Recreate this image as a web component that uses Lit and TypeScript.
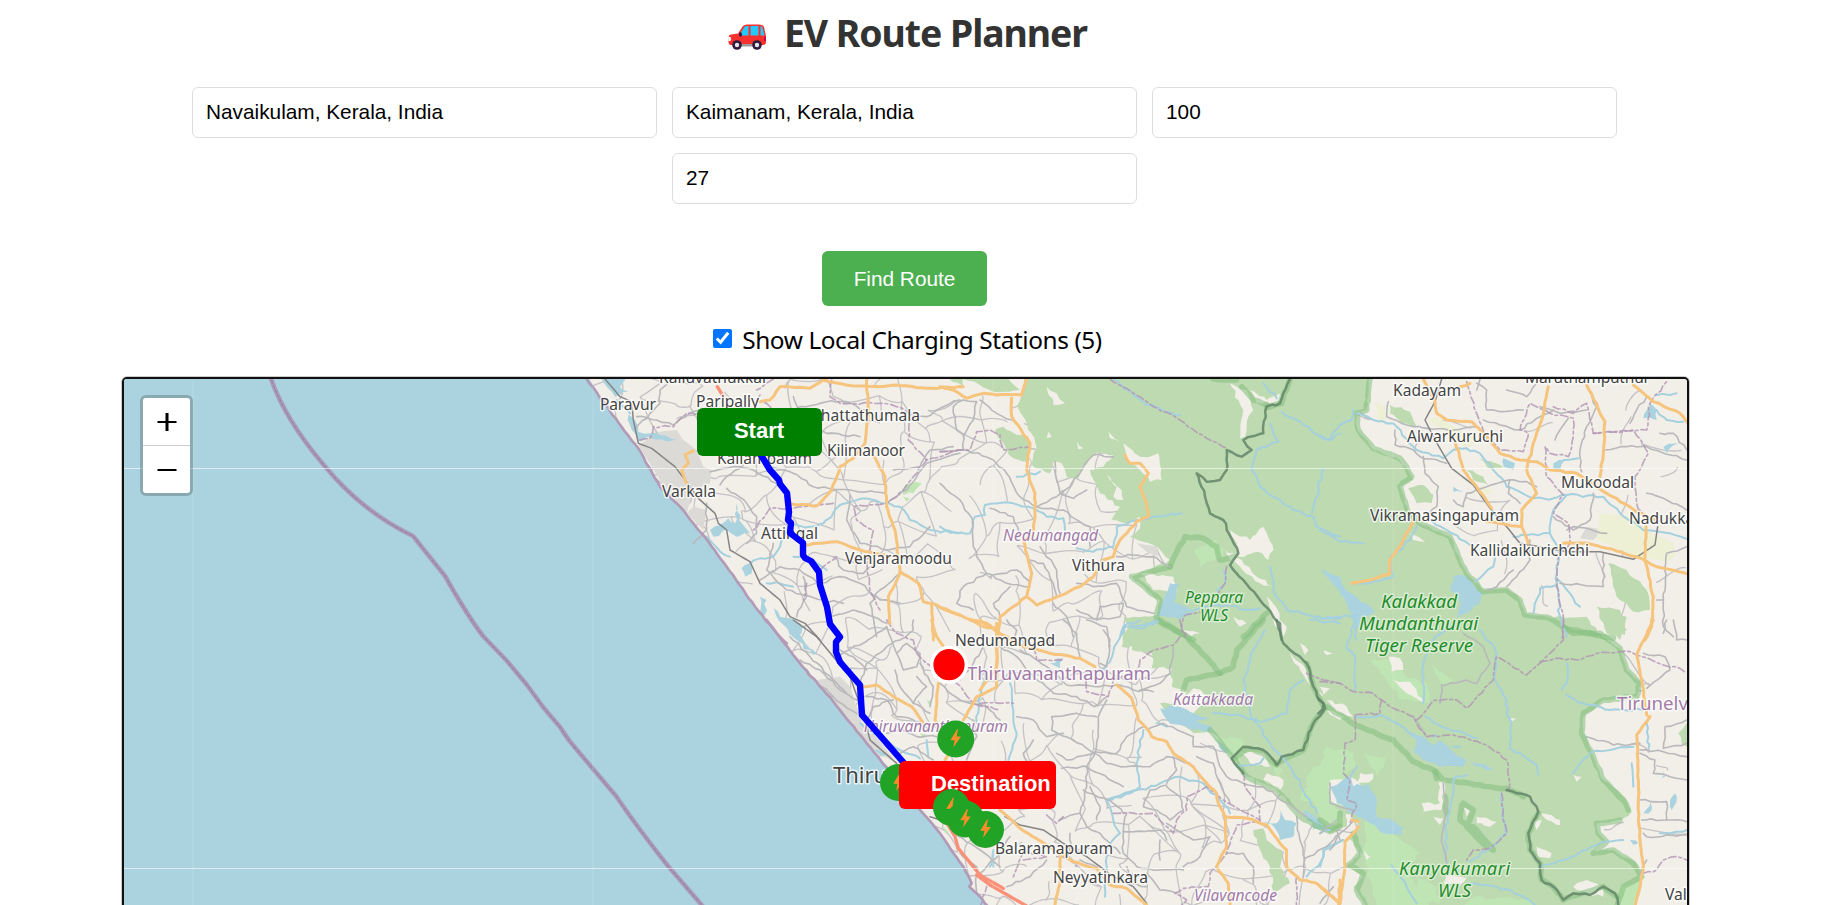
import { LitElement, html, svg, css } from "lit";
import { customElement, property, state } from "lit/decorators.js";

type Kind =
    | "forest" | "scrub" | "clearing" | "urban" | "farm" | "lake"
    | "river" | "minor" | "major" | "trunk" | "rail" | "admin"
    | "reserve" | "border" | "coast";

interface Sheet {
    x: number;
    y: number;
    shapes: Partial<Record<Kind, string[]>>;
}

interface Label {
    text: string;
    x: number;
    y: number;
    width?: number;
    kind?: string;
}

const AREAS: Kind[] = ["urban", "farm", "forest", "scrub", "clearing", "lake"];
const LINES: Kind[] = ["reserve", "river", "minor", "admin", "coast", "rail", "major", "trunk", "border"];

// how far a segment may stray from the straight line, in sheet units
const STRAY: Partial<Record<Kind, number>> = {
    forest: 9, scrub: 12, clearing: 10, lake: 12, river: 9, minor: 7, major: 4, admin: 6, border: 7, reserve: 5, coast: 3,
};

// Sheets are drawn at three units to the pixel
const SHEETS: Sheet[] = [
    {
        x: 560, y: 370,
        shapes: {
            urban: [
                "235,225 300,185 350,180 370,210 410,240 430,290 455,300 450,340 400,360 380,430 330,400 300,330",
                "400,410 440,420 430,480 380,430",
            ],
            forest: ["1150,20 1210,20 1210,48"],
            lake: [
                "120,20 200,20 180,50 205,65 165,80 140,50",
                "205,135 225,150 235,185 270,190 350,210 320,215 260,200 235,215 215,180",
                "505,445 525,460 530,400 545,460 570,490 530,500 500,480 460,500 450,480",
                "545,595 570,580 575,610 555,620",
                "600,680 620,690 615,735 600,730",
                "635,700 660,740 720,760 725,790 700,800 650,740",
            ],
            river: [
                "570,580 600,565 640,560 660,530 690,465 750,470 790,460 840,405 910,385 980,400 1020,410 1050,450 1110,480 1200,490",
                "440,500 480,545 510,560", "620,640 660,640 700,650", "700,560 760,570 800,600", "170,90 210,130",
            ],
            minor: [
                "225,180 270,130 300,100 300,60 330,35", "230,140 290,150 340,165 400,125 470,110",
                "620,150 720,110 800,95 860,95 925,130", "700,80 720,130 800,190 900,200",
                "440,400 440,480 400,520", "450,305 520,290 580,300 650,340", "480,345 500,320 550,285",
                "500,355 560,400 590,440 590,490 560,520", "630,290 700,310 760,350 870,360 975,370",
                "980,400 1040,360 1100,280 1200,250", "870,375 860,450 900,520 985,540 1050,530 1110,470",
                "600,630 660,590 720,600 780,640 840,620 900,640 960,690 1020,700", "640,520 620,600 680,660 790,690 850,700",
                "800,740 880,720 940,740 980,760", "730,620 740,680 710,740", "820,560 850,600 910,610 960,570",
                "1020,610 960,660 930,700 950,800", "1000,300 1080,290 1110,240 1180,230", "1030,130 1100,140 1150,110 1200,90",
            ],
            rail: ["135,27 180,80 215,95 220,150 235,220 275,235 345,290 390,350 415,385 465,430 475,460 500,480 510,540 570,575 600,640 660,690 690,740 735,760 780,810"],
            major: [
                "600,95 630,90 660,50 750,55 790,30 860,45 960,50 1010,45 1100,55 1210,50",
                "920,27 925,130 915,220 880,265 840,290 815,360 770,408 695,402",
                "930,240 975,320 980,410 1005,480 1020,610 985,680 990,760",
                "400,243 375,255 385,280 365,300 380,340", "730,525 830,515 900,540 990,560",
                "1020,605 1075,640 1090,695 1115,700 1200,735", "1115,700 1120,810",
            ],
            trunk: ["472,50 490,80"],
            admin: [
                "240,210 270,205 280,170 340,170 380,130 420,130", "600,75 590,95 620,100 650,130", "640,27 590,60",
                "815,30 810,80 840,100 960,100 1010,110 1050,130 1045,210 1100,270 1200,240",
                "1100,270 1060,320 1030,360 980,400 880,410 890,450 940,480 920,580 930,660 960,720",
                "820,400 700,415 630,415 580,480", "780,600 830,560", "740,640 730,690",
            ],
            scrub: ["1035,345 1085,340 1060,370 1030,375", "1030,380 1050,385 1040,395", "320,470 350,480 330,500"],
            coast: ["80,27 130,95 195,185 235,235 300,350 360,410 425,490 500,590 585,710 650,790 680,820"],
        },
    },
    {
        x: 940, y: 370,
        shapes: {
            forest: [
                "265,0 250,60 232,105 262,165 290,235 275,285 330,310 340,275 365,280 380,320 415,325 425,290 470,250 520,255 490,290 450,300 480,370 540,410 515,450 560,460 600,440 600,475 570,500 640,525 690,570 575,620 660,690 650,745 575,755 550,790 545,830 1230,830 1230,0",
                "165,180 190,170 230,195 265,200 265,275 220,265",
                "60,20 190,20 240,60 160,65 120,45",
            ],
            scrub: ["760,540 830,510 850,560 780,590"],
            clearing: [
                "320,50 350,70 375,100 340,105", "505,185 540,215 510,205", "325,185 320,205 335,200", "410,215 430,235 415,238",
                "550,220 600,260 655,250 665,330 630,335 600,300 560,270", "500,315 545,360 550,390 520,380 530,350",
                "870,40 920,60 940,120 925,140 915,200 900,205 910,120", "930,60 980,90 1020,70 1010,100 950,100",
                "870,480 930,510 970,470 1000,540 985,570 950,545 895,560 890,520", "840,530 880,550 950,620 1000,650 960,640 900,590",
                "980,680 1040,770 1030,800 1000,750", "880,740 920,760 900,770", "730,780 780,790 740,800",
                "600,610 700,620 710,670 640,660",
            ],
            urban: ["590,520 650,530 655,560 620,545", "700,570 760,530 770,545 715,600"],
            lake: ["690,640 720,640 700,700 760,720 720,750 650,740 670,690", "1140,595 1200,620 1200,655 1165,625"],
            river: [
                "0,470 50,490 90,490 105,440 135,435 135,405 220,400 280,415 320,440 370,445 375,480",
                "410,535 460,545 520,530 530,470 590,450 640,440 725,430",
                "520,27 620,105 720,135", "990,160 1015,215 950,240 935,300 960,350 1060,420 1120,440 1130,470 1200,500",
                "1150,295 1115,430", "1025,125 1080,155 1165,210 1200,190", "970,40 1010,85", "990,590 1000,660 1040,720 1120,740 1200,745",
                "540,800 555,770 600,775 655,755", "720,740 780,715 860,705 920,720 960,715", "850,600 855,640 830,660", "230,320 300,305",
            ],
            minor: [
                "0,245 80,240 160,270 200,310 240,380 290,410 350,380 390,350 430,290 460,255 520,260", "0,340 60,390 100,460 100,530 140,610 200,640 270,650",
                "70,90 40,110 50,180 70,195 70,240", "70,90 110,95 100,150 70,200", "120,90 170,130 215,150", "290,410 370,420 450,470 450,530",
                "345,275 350,330 360,370 400,385 440,360", "150,415 220,440 240,500", "300,530 350,600 360,670", "270,570 310,580 340,640 350,680",
                "410,640 460,650 530,640 560,710 640,730", "530,560 580,555 640,560 690,590", "140,610 70,650 50,700 100,720", "210,650 160,700 180,740",
                "340,700 380,740 400,800", "410,720 470,750 540,740 550,700 480,710 470,750", "150,620 230,600 270,640", "200,750 230,780 220,810",
            ],
            major: [
                "0,50 40,60 80,85 130,70 170,75 245,75 260,27", "215,85 215,140 270,220 260,300 285,370 285,430 280,490 250,510 275,610 260,680 180,740 175,800",
                "260,680 290,705 330,690 420,650 460,620 490,570 520,560 540,510 590,455 625,440 620,400 600,350 625,310 600,280 570,280 555,255",
                "0,712 80,745 140,760 175,785",
            ],
            admin: [
                "510,27 600,80 640,110 720,150 800,205 860,235", "0,245 90,240 110,185 150,180 180,195 190,240 270,230",
                "860,590 855,640 830,680", "800,720 730,740 725,780 740,800",
            ],
            reserve: [
                "690,590 575,620 660,690 650,750 760,810", "690,590 735,500 790,505 830,530 840,570 880,560",
                "905,50 940,90 980,105", "820,27 890,30", "980,730 910,800", "1050,27 1025,100 980,112",
            ],
            border: ["1050,27 1020,100 980,110 970,190 910,210 935,240 905,260 860,240 860,300 840,330 800,335 770,310 795,380 810,430 850,450 895,550 870,585 960,690 1020,760 1025,810"],
        },
    },
    {
        x: 1320, y: 370,
        shapes: {
            farm: [
                "165,95 195,110 200,150 175,150", "320,150 350,140 400,170 480,210 440,235 370,180",
                "840,430 940,440 980,480 1060,520 1065,560 1040,575 950,560 830,510", "470,350 520,360 500,375",
            ],
            urban: ["800,470 850,480 820,510 780,505"],
            forest: [
                "-20,0 150,0 140,120 105,130 110,170 160,240 240,270 280,330 240,350 265,430 310,465 390,500 420,570 440,610 490,660 560,655 600,690 615,730 680,745 730,770 800,780 880,830 -20,830",
                "210,105 270,125 290,170 245,160 210,130", "265,355 310,345 340,375 335,400 290,400",
                "865,580 920,600 980,660 990,720 940,725 890,680", "830,710 900,720 920,780 900,810 860,790", "700,750 800,740 840,800 760,810",
                "440,300 490,320 505,345 460,330", "480,265 550,290 510,297",
            ],
            clearing: ["270,490 315,515 280,510"],
            lake: [
                "400,620 440,620 490,670 480,700 410,745 420,690 390,660", "0,595 60,640 110,680 165,725 130,740 110,780 80,700",
                "550,265 585,280 580,300 552,290", "700,280 735,270 720,300 700,300", "400,350 430,365 400,365",
                "990,100 1010,120 1010,150 970,145", "1030,230 1075,220 1040,250", "660,180 650,190 655,175", "515,75 505,90",
            ],
            river: [
                "110,130 160,150 220,160 290,240 370,265 400,240 440,235 480,250 560,350 640,385 700,385 740,375 850,380 900,430 970,480 1050,490 1110,510",
                "740,375 700,420 690,490 620,495 580,500", "690,490 715,540 710,640 720,740 740,800", "715,630 750,670 780,710",
                "710,645 660,655 640,730", "525,565 520,590 465,635", "320,450 380,480 450,525", "0,480 60,515 130,520",
                "290,470 270,510 210,560 220,620 150,640 100,640", "0,195 30,210 60,165 95,150 100,120", "730,270 775,265", "1010,75 1070,70",
                "0,745 50,740 110,735", "110,810 105,770", "340,810 390,770", "1010,120 1040,150 1090,155",
            ],
            minor: [
                "205,95 200,140 280,170 400,180 470,170", "225,180 225,225 280,240 300,260 380,280", "310,260 315,310 355,350 350,410 310,440",
                "470,40 500,60 500,120 540,125 610,120", "490,150 540,165 600,180 660,140 700,120", "660,110 720,130 800,120", "745,145 705,210",
                "855,240 920,230 980,230 1100,270", "930,160 950,120 980,80", "1020,190 1060,190 1100,240", "800,50 830,110 800,170 780,240 785,305",
                "820,370 810,450 760,480 700,440", "400,390 430,410 440,370 500,350 565,330", "570,330 565,370 600,400", "565,330 620,335 650,350",
                "850,550 850,650 720,640", "630,510 630,570 590,620 560,650", "580,600 530,650", "1100,530 1040,550 1030,690 1010,690", "1030,690 1030,770 1060,800",
                "980,370 1040,390 1100,420", "480,27 470,60", "560,60 620,80 650,40", "740,480 760,470 860,490", "500,660 530,650",
            ],
            rail: ["365,27 345,95 315,150 345,210 395,295 460,345 510,415 560,470 600,520 740,545 840,545 940,568 1005,525 1013,470"],
            major: [
                "310,27 345,95 350,130 380,150 455,155 500,200 540,250 600,270 650,275 690,300 770,310 860,370 960,430 1010,450",
                "405,215 425,280 430,300 470,350 515,415", "685,50 665,150 640,220 620,300 650,370 605,420 605,470 625,520",
                "500,455 605,470", "800,45 855,155 850,250 840,320", "940,45 1000,95 1080,130 1110,170",
                "730,520 800,520 860,535 950,560 1010,590 1110,615", "978,470 975,570 1000,680 995,770 975,810",
                "280,455 250,510 210,570 210,610 150,630 95,640", "420,50 450,40",
            ],
            admin: [
                "440,35 470,130 490,185 540,240 610,245 625,190 600,180 630,100 690,130 760,145 760,200 745,260 690,250 675,230 680,320 730,375 700,430 745,460 750,520 715,560 710,650 730,740 725,810",
                "700,110 760,130 800,100 820,190 940,180 985,250 945,320 950,400 970,440", "820,190 980,180 990,100 1040,35",
            ],
            reserve: ["150,27 140,120 110,130 115,180 160,235 240,265 275,320 240,350 265,430 310,465 390,500 420,570 440,610 490,665 560,660 600,690 615,735 690,745 735,775 800,790 880,805"],
        },
    },
    {
        x: 700, y: 620,
        shapes: {
            urban: ["350,180 420,170 450,200 480,290 560,390 590,430 520,390 440,300"],
            lake: ["240,0 290,10 310,60 350,100 340,105 290,60", "520,390 560,400 550,410"],
            river: ["480,310 520,340 560,360 600,390 660,415", "860,150 835,240 830,310", "680,360 685,410", "740,550 790,600", "880,700 870,740"],
            minor: [
                "410,110 520,50 560,20", "480,190 500,130 560,80 600,60 640,30 640,0", "560,20 590,100 620,70 660,100 650,140 610,150 590,100",
                "585,150 600,200 640,250 690,280", "500,230 560,240 590,290 640,300 690,330", "500,300 520,260 580,240",
                "660,130 700,200 690,260", "850,80 820,130 780,180", "720,190 780,240 860,260 900,300", "560,340 610,330 650,350 710,350",
                "320,160 400,230 470,280", "300,120 360,150 420,210 480,250", "270,50 330,110 440,220", "800,420 830,350 820,300", "700,420 640,380 600,400",
                "760,640 840,690 900,740", "780,700 830,740 830,820", "650,170 680,200 640,250", "500,150 460,110 420,90", "840,760 900,700 930,650",
            ],
            rail: ["280,0 350,50 400,110 450,170 475,240 500,320 510,360 590,430", "690,590 720,600"],
            major: [
                "695,0 710,50 740,90", "890,10 890,130 890,200 830,230 790,300", "490,200 530,195 580,230 635,260 670,310",
                "715,190 705,300 735,370", "810,0 850,20 890,25", "735,420 755,380",
            ],
            trunk: ["735,600 765,650 775,685 840,765 910,805"],
            admin: ["560,0 590,40 640,60 650,100 700,150 770,190 820,250 900,270", "0,847 12,860"],
            scrub: ["660,340 680,345 670,355", "680,240 695,245 690,260", "730,620 745,635 735,640"],
            coast: ["200,0 300,130 400,245 500,370 590,480 660,570 720,640 790,740 815,790 808,800 835,825 865,860"],
        },
    },
    {
        x: 980, y: 620,
        shapes: {
            forest: [
                "430,-10 460,40 455,90 515,100 515,145 575,145 575,200 620,215 605,250 540,250 570,290 640,340 700,340 760,400 790,460 890,510 960,580 1050,640 1100,620 1100,-10",
                "820,630 850,625 860,660 905,690 900,740 930,790 880,815 870,740 845,700",
            ],
            scrub: ["720,350 790,360 780,440 730,390", "1000,440 1090,430 1090,560 960,540", "870,430 910,450 890,470", "1000,540 1060,560 1090,600 1040,620"],
            clearing: [
                "780,395 850,400 870,440 810,430", "860,460 910,480 900,510 850,480", "960,70 985,90 975,105", "930,100 980,150 990,195 960,150",
                "1030,90 1055,100 1040,105", "1040,270 1090,290 1080,300", "1080,480 1045,500 1060,545 1085,540", "1010,210 1030,230", "640,205 690,230 640,280 570,270 600,240",
            ],
            lake: [
                "540,265 600,260 690,300 650,300 700,330 640,330 560,300", "900,570 915,600 950,610 940,650 900,660 885,625 850,605 890,610",
                "970,570 1030,610 1040,640 1000,625", "210,130 250,115 240,145", "700,350 750,400 730,395", "1050,500 1085,500 1080,545",
            ],
            river: [
                "480,0 430,20 400,95 370,150", "855,30 820,90 790,180 810,280 870,370 930,440 990,540 1010,580", "970,180 930,210 920,280 850,305 780,285 700,280",
                "490,330 470,430 480,500 380,540", "380,540 400,600 420,640 385,680 380,740 375,830", "540,490 600,470 670,490 720,540 750,580",
                "380,540 450,520 540,490", "90,190 100,270 110,340 85,420", "990,0 1080,10", "1090,660 1040,680 1020,730 980,770", "770,440 840,430 850,415", "530,310 560,320",
                "450,20 510,10 530,0", "40,690 40,740",
            ],
            minor: [
                "60,80 110,110 160,170 220,220 290,230 345,260 380,230", "120,90 200,140 260,195 345,200 420,195 460,210 520,215",
                "380,240 355,290 355,350 345,400 320,440 320,500 300,580", "345,400 280,360 215,330 215,290 290,280 350,290",
                "110,290 160,300 200,350 250,340", "345,400 380,430 440,440 510,440 560,410 630,430", "345,395 410,400 440,350 490,320",
                "230,400 260,420 345,400", "245,445 320,440 430,500", "310,510 400,550 430,580", "560,500 600,530 610,570 570,600 530,570 490,560 510,510 560,495",
                "440,580 430,630 430,700 470,740 540,750 610,750", "430,635 540,630 560,660", "560,610 640,660 690,650 660,710 610,740",
                "640,350 640,380 700,380 720,440 740,470 790,490 850,500 950,570 980,590", "650,410 700,430 715,480 750,550", "740,700 790,700 820,740 820,790",
                "950,590 960,660 975,715 970,770", "975,715 1040,680 1080,640", "240,600 300,580 320,620 360,640 420,700", "200,720 150,770 80,800",
                "500,760 540,810 590,820", "440,740 450,790 500,800", "370,30 390,60 380,140 360,130", "250,0 290,40 300,110", "320,0 380,20 390,80",
                "480,210 540,190 570,160 580,80", "500,330 550,310 640,350", "150,440 130,400 160,360", "300,720 350,740 380,790", "540,660 540,720", "270,640 270,700 230,710",
                "330,500 360,560 350,600", "580,410 590,450 560,490",
            ],
            rail: ["75,590 120,615 190,630 250,670 320,710 400,770 460,800 500,850"],
            major: [
                "0,0 50,35 50,140 0,210", "50,35 120,75 210,100 300,115 345,140", "410,195 455,235 475,300 500,325 515,350 560,365 580,400 640,440 680,490 710,520 715,550 735,590 740,680 710,740 745,790 750,855",
                "735,590 800,595 860,615 900,670 920,690 920,740 960,780 1010,790 1080,850", "60,570 120,625 200,675 240,700 280,725 350,745 390,795 440,805 500,855", "240,700 240,790 225,855",
                "1080,780 1076,855",
            ],
            trunk: ["-10,765 30,795 140,858"],
            admin: [
                "600,50 580,75 520,90 480,120 470,150 400,180 385,230 320,215 320,160", "160,80 170,120 250,120", "0,250 60,250 100,250",
                "200,585 230,610 250,590", "400,580 520,580 580,640 590,600 620,570 620,530 680,500 730,540 800,580 840,600",
                "790,460 795,500 840,560 840,605 770,615 740,700 690,760 685,800 610,805 585,820 620,840 600,860", "980,160 1030,180 1080,190",
                "130,720 200,710 130,690 100,770", "0,860 20,800", "210,680 290,740", "950,770 950,860", "600,0 615,50",
            ],
            reserve: [
                "540,0 620,50 720,160 760,140 770,90 850,0", "720,160 620,180 610,210", "690,330 755,410 800,470 890,510 960,590 1050,635 1080,620",
                "890,435 850,400 800,385 760,415", "890,430 970,390 1000,310 1035,265 1000,200 980,130",
            ],
            border: ["890,0 910,70 980,130 1000,200 1035,265 1000,310 970,390 905,410 890,435 850,390 790,380 755,415 790,460"],
        },
    },
    {
        x: 1320, y: 620,
        shapes: {
            forest: [
                "-20,-10 730,-10 760,40 840,40 900,85 920,150 965,190 950,230 850,240 790,290 790,340 820,410 850,480 920,540 935,575 900,600 830,610 835,640 860,665 820,690 880,690 950,730 970,770 930,800 890,860 140,860 100,800 130,770 80,735 130,705 85,655 115,605 60,570 -20,630",
                "840,-10 920,-10 915,45 870,30", "1100,310 1075,340 1085,370 1110,385",
            ],
            scrub: [
                "150,120 210,120 260,170 320,190 330,250 250,240 210,200", "20,380 100,400 110,440 60,470 0,440", "0,480 40,500 20,560 0,560",
                "140,590 230,650 300,700 260,760 330,860 170,860 130,700", "130,400 200,410 170,470", "900,800 960,780 950,860 890,860", "460,830 620,840 640,860 430,860",
                "330,130 400,180 370,200", "290,770 350,800 360,850 290,850",
            ],
            clearing: [
                "205,110 240,115 250,150 215,155", "220,180 270,185 315,250 260,220", "0,200 30,205 10,225", "20,240 80,260 100,290 50,275",
                "120,460 160,460 150,485 110,490", "30,480 90,470 130,500 80,560 30,540", "305,550 360,550 355,490 375,480 365,570 310,575", "340,590 370,595 360,615",
                "470,590 530,605 510,620 470,610", "665,580 720,600 720,615 680,600", "635,600 665,600 650,630", "650,680 695,700 690,715 655,710",
                "760,800 800,780 845,800 850,830 800,820", "760,465 785,470 770,485", "570,295 588,295 575,305", "380,765 440,775 420,795 370,790", "10,95 40,100 20,105",
                "430,560 450,570 440,590", "130,690 150,710 140,720",
            ],
            lake: [
                "260,335 290,345 340,375 360,360 390,385 440,420 430,440 360,440 310,420 280,395 290,370", "440,415 520,450 470,440",
                "40,500 80,470 100,500 145,490 170,540 170,590 250,620 245,645 190,640 150,610 100,580 50,550", "1065,520 1070,545 1055,570 1050,545",
                "990,545 995,570 970,580", "1030,450 1035,470 1025,475", "930,660 955,670 940,675",
            ],
            river: [
                "105,0 80,85 105,110 105,210", "310,250 310,130 330,70 370,30 440,0", "480,30 530,100 525,180 560,240 560,280 575,310 570,385 650,435 655,465",
                "760,460 780,430 815,395 870,390 940,380", "105,290 180,285 240,315 280,345", "315,290 380,325 470,355", "740,130 740,190 725,210", "740,225 790,250 870,270 970,270",
                "545,520 550,600 560,640 510,685 450,725", "405,475 390,560 375,620 380,740", "440,465 400,475", "440,790 530,800 600,825 645,855", "660,745 730,720 800,690 850,665 910,660",
                "215,735 260,800 290,850", "110,440 90,480", "0,640 30,630", "400,380 420,380", "340,350 350,345", "935,430 940,500", "980,310 985,350 985,390", "0,740 10,690 70,660", "1100,630 1020,640",
            ],
            minor: [
                "980,205 1050,150 1035,110 970,100", "1060,0 1070,60 1100,60", "800,350 880,375 960,370", "960,390 1030,395 1100,410", "1100,300 1035,320 1030,385 1100,370",
                "960,400 1005,420 1000,460 1050,470 1100,480", "955,540 1040,545 1040,600 1100,605", "970,640 980,650 1100,645", "965,600 1040,600", "1040,0 1030,40", "980,720 960,760",
                "370,490 380,560 365,650 380,740", "110,600 60,640 30,690", "0,640 50,600", "60,660 50,630", "0,850 40,800", "30,490 30,550 100,570",
                "360,250 365,195 440,180 470,190 510,130 490,80 430,40", "320,350 280,290",
            ],
            major: [
                "1000,0 950,105 965,180 980,285 990,290 950,345 955,500 955,600 970,750 945,860", "115,620 100,640 75,665 75,740 60,850 0,800",
                "95,600 115,605",
            ],
            admin: [
                "0,185 60,190 100,215 160,220 220,265 280,290 290,310 320,350 400,345 500,375 560,420 570,490 565,510", "290,300 345,240 410,240 440,265 520,180 530,110 620,165 690,100 730,60 730,0",
                "660,125 720,115 770,120 830,100 930,95 1030,135 1080,145 1100,160", "105,285 180,280 185,240", "105,290 105,360 75,370 70,460 90,480 80,540 110,550 90,610",
                "545,520 550,600 560,640 510,685 460,690 440,720", "970,760 1010,750 1030,720 1070,710 1100,720",
            ],
            reserve: [
                "20,260 105,315 220,360 280,425 340,450 370,480 570,510 610,530", "730,20 760,40 840,40 900,85 920,150 960,190 950,230 850,240 790,280 785,340 820,410 850,480 910,540 925,570",
                "430,550 460,570 440,620 500,680 520,690 470,630 420,600 425,555", "375,530 380,580", "900,600 830,610 835,640 860,665 820,700 880,690 940,730 965,770 910,800 890,860",
                "100,640 120,700 85,735 130,760 110,810 135,855", "0,600 30,625 60,610 60,580", "345,455 350,475",
                "655,580 625,640 630,690 660,730 665,780 700,800 730,840 850,800 890,830",
            ],
            border: ["560,510 590,520 630,530 655,575 625,640 630,690 660,730 665,780 700,800 730,840 760,820 810,825 850,800 885,820 895,858", "-5,235 10,250 8,268 -5,280"],
        },
    },
];

const LABELS: Label[] = [
    { text: "Paravur", x: 600, y: 410, width: 56 },
    { text: "Kalluvathukkal", x: 659, y: 383, width: 107 },
    { text: "Paripally", x: 696, y: 407, width: 63 },
    { text: "Chattathumala", x: 811, y: 421, width: 109 },
    { text: "Kilimanoor", x: 827, y: 456, width: 78 },
    { text: "Kallambalam", x: 717, y: 464, width: 95 },
    { text: "Varkala", x: 662, y: 497, width: 54 },
    { text: "Attingal", x: 761, y: 539, width: 57 },
    { text: "Venjaramoodu", x: 845, y: 564, width: 107 },
    { text: "Nedumangad", x: 1003, y: 541, width: 95, kind: "taluk" },
    { text: "Vithura", x: 1072, y: 571, width: 53 },
    { text: "Peppara", x: 1185, y: 603, width: 58, kind: "park" },
    { text: "WLS", x: 1200, y: 621, width: 28, kind: "park" },
    { text: "Kadayam", x: 1393, y: 396, width: 68 },
    { text: "Maruthamputhur", x: 1525, y: 383, width: 125 },
    { text: "Alwarkuruchi", x: 1407, y: 442, width: 96 },
    { text: "Mukoodal", x: 1561, y: 488, width: 73 },
    { text: "Vikramasingapuram", x: 1370, y: 521, width: 149 },
    { text: "Nadukkavu", x: 1629, y: 524 },
    { text: "Kallidaikurichchi", x: 1470, y: 556, width: 119 },
    { text: "Kalakkad", x: 1381, y: 608, width: 76, kind: "park big" },
    { text: "Mundanthurai", x: 1359, y: 630, width: 119, kind: "park big" },
    { text: "Tiger Reserve", x: 1365, y: 652, width: 108, kind: "park big" },
    { text: "Nedumangad", x: 955, y: 646, width: 100 },
    { text: "Thiruvananthapuram", x: 967, y: 680, width: 184, kind: "district" },
    { text: "Thiruvananthapuram", x: 862, y: 732, width: 146, kind: "taluk" },
    { text: "Thiruvananthapuram", x: 833, y: 783, kind: "city" },
    { text: "Kattakkada", x: 1173, y: 705, width: 80, kind: "taluk" },
    { text: "Balaramapuram", x: 995, y: 854, width: 118 },
    { text: "Neyyatinkara", x: 1053, y: 883, width: 95 },
    { text: "Vilavancode", x: 1194, y: 901, width: 83, kind: "taluk" },
    { text: "Kanyakumari", x: 1399, y: 875, width: 111, kind: "park mid" },
    { text: "WLS", x: 1438, y: 897, width: 33, kind: "park mid" },
    { text: "Tirunelveli", x: 1617, y: 710, kind: "district" },
    { text: "Valliyur", x: 1665, y: 900 },
];

const COAST = "587,375 603,402 625,432 638,448 660,487 680,507 702,533 727,567 755,607 777,633 800,663 833,702 867,743 897,780 920,810 940,833 963,867 972,884 969,887 978,895 990,908";
const SEA_LIMIT = "M270 376Q284 418 323 464Q361 511 413 536L445 576Q467 615 483 636L507 661L527 685L543 707L560 727Q568 740 577 750L616 796Q640 831 668 866L706 910";
const ROUTE = "761,455 770,470 779,480 780,484 787,493 789,512 788,520 791,523 790,533 803,543 803,555 805,558 811,561 819,572 820,585 827,607 830,624 840,637 836,642 836,652 840,662 860,685 862,715 904,763";

const STATIONS = [
    { x: 898.5, y: 782.5, under: true },
    { x: 955.7, y: 739 },
    { x: 951.5, y: 807.5 },
    { x: 965.5, y: 819 },
    { x: 985.5, y: 829.5 },
];

function random(seed: number) {
    let s = seed;
    return () => {
        s = (s * 16807) % 2147483647;
        return s / 2147483647;
    };
}

function roughen(points: string, stray: number, seed: number, closed = false) {
    const rnd = random(seed * 7919 + 13);
    const pts = points.split(" ").map(p => p.split(",").map(Number));
    if (closed) pts.push(pts[0]);
    let d = `M${pts[0][0]} ${pts[0][1]}`;
    for (let i = 1; i < pts.length; i++) {
        const [ax, ay] = pts[i - 1];
        const [bx, by] = pts[i];
        const steps = Math.max(1, Math.round(Math.hypot(bx - ax, by - ay) / 16));
        for (let k = 1; k <= steps; k++) {
            const t = k / steps;
            const off = k === steps ? 0 : stray;
            d += `L${(ax + (bx - ax) * t + (rnd() - 0.5) * off).toFixed(1)} ${(ay + (by - ay) * t + (rnd() - 0.5) * off).toFixed(1)}`;
        }
    }
    return closed ? d + "Z" : d;
}

// Village lanes between the coast and the hills
function lanes() {
    const rnd = random(4242);
    const cell = 25;
    const cols = 44;
    const rows = 23;
    const node: number[][][] = [];
    for (let r = 0; r < rows; r++) {
        node.push([]);
        for (let c = 0; c < cols; c++) {
            node[r].push([590 + c * cell + rnd() * 22, 365 + r * cell + rnd() * 22]);
        }
    }
    let d = "";
    const link = (a: number[], b: number[]) => {
        const bend = () => (rnd() - 0.5) * 14;
        const mid = (t: number) => `${(a[0] + (b[0] - a[0]) * t + bend()).toFixed(1)} ${(a[1] + (b[1] - a[1]) * t + bend()).toFixed(1)}`;
        d += `M${a[0].toFixed(1)} ${a[1].toFixed(1)}C${mid(0.3)} ${mid(0.7)} ${b[0].toFixed(1)} ${b[1].toFixed(1)}`;
    };
    for (let r = 0; r < rows - 1; r++) {
        for (let c = 0; c < cols - 1; c++) {
            const density = c > 30 ? 0.1 : 0.54;
            if (rnd() < density) link(node[r][c], node[r][c + 1]);
            if (rnd() < density) link(node[r][c], node[r + 1][c]);
            if (rnd() < density / 6) link(node[r][c], node[r + 1][c + 1]);
        }
    }
    return d;
}

@customElement("route-map")
export class RouteMap extends LitElement {

    static styles = css`
        :host {
            display: block;
            position: relative;
            overflow: hidden;
            background: #aad3df;
        }

        svg.chart {
            display: block;
            width: 1563px;
            height: 560px;
        }

        path, polyline {
            fill: none;
            stroke-linejoin: round;
            stroke-linecap: round;
        }

        .land { fill: #f2efe9; }
        .sea { fill: #aad3df; }
        .lanes { stroke: #c4c3c5; stroke-width: 1.3; }
        .limit { stroke: #a99bba; stroke-width: 4.6; }
        .limit-core { stroke: #9a82a6; stroke-width: 1.2; stroke-dasharray: 3 2; }

        .urban { fill: #dcdad6; }
        .farm { fill: #eef0d5; }
        .forest { fill: #bedab1; }
        .scrub { fill: #bfe5b4; }
        .clearing { fill: #f2efe9; }
        .lake { fill: #aad3df; }
        .river { stroke: #a5d0de; stroke-width: 6; }
        .minor { stroke: #b9b8bb; stroke-width: 4.8; }
        .major { stroke: #f6c47c; stroke-width: 9; }
        .trunk { stroke: #fb9078; stroke-width: 10; }
        .rail { stroke: #858585; stroke-width: 4.5; }
        .admin { stroke: #b195b4; stroke-width: 5; stroke-dasharray: 22 9 8 9; opacity: 0.8; }
        .coast { stroke: #b39bb8; stroke-width: 8; }
        .reserve { stroke: #84c07e; stroke-width: 17; opacity: 0.55; }
        .border { stroke: #64866a; stroke-width: 7.5; opacity: 0.85; }

        .seams { stroke: #ffffff; stroke-width: 1; opacity: 0.6; }
        .seams-v { stroke: #ffffff; stroke-width: 1; opacity: 0.15; }

        text {
            font-family: "Noto Sans", "Open Sans", sans-serif;
            font-size: 15.6px;
            fill: #444444;
            stroke: rgba(255, 255, 255, 0.75);
            stroke-width: 3px;
            stroke-linejoin: round;
            paint-order: stroke;
        }

        .taluk { fill: #a27ba8; font-style: italic; }
        .district { fill: #a27ba8; font-size: 18.7px; }
        .city { font-size: 22px; }
        .park { fill: #1f8c2b; font-style: italic; stroke: rgba(225, 242, 218, 0.8); font-size: 15.6px; }
        .park.mid { font-size: 17.8px; }
        .park.big { font-size: 18.8px; }

        .route { stroke: #0000ff; stroke-width: 6.4; }

        .puck { fill: #21a325; }
        .bolt { fill: #ff8c2b; }
        .here { fill: #ff0000; stroke: #ffffff; stroke-width: 3.4; }

        .pin {
            position: absolute;
            box-sizing: border-box;
            height: 48.5px;
            border-radius: 6px;
            color: white;
            font: bold 22px/46px "Liberation Sans", Arial, sans-serif;
            text-align: center;
            white-space: nowrap;
        }

        .pin.start {
            left: 572.5px;
            top: 28.7px;
            width: 125px;
            background: green;
        }

        .pin.destination {
            left: 775px;
            top: 381.7px;
            width: 156.5px;
            padding-left: 32px;
            text-align: left;
            background: red;
        }

        svg.overlay {
            position: absolute;
            left: 0;
            top: 0;
            width: 1563px;
            height: 560px;
        }

        .zoom {
            position: absolute;
            left: 16px;
            top: 16px;
            border: 3px solid rgba(0, 0, 0, 0.2);
            border-radius: 6px;
            background-clip: padding-box;
        }

        .zoom button {
            display: flex;
            align-items: center;
            justify-content: center;
            width: 47px;
            height: 47px;
            padding: 0;
            border: 0;
            background: white;
            border-radius: 0 0 3px 3px;
        }

        .zoom button:first-child {
            height: 48px;
            border-bottom: 1px solid #cccccc;
            border-radius: 3px 3px 0 0;
        }

        .zoom svg {
            width: 20px;
            height: 20px;
        }

        .zoom path {
            stroke: black;
            stroke-linecap: butt;
        }
    `

    @property({ type: Boolean })
    showStations = true

    private _sheet(kind: Kind, closed: boolean) {
        return SHEETS.map((s, n) => svg`
            <g transform="translate(${s.x} ${s.y}) scale(0.33333)">
                ${(s.shapes[kind] ?? []).map((p, i) => svg`
                    <path class=${kind} d=${roughen(p, STRAY[kind] ?? 0, n * 50 + i + 1, closed)}></path>
                `)}
            </g>
        `);
    }

    private _station(s: { x: number, y: number }) {
        return svg`
            <g transform="translate(${s.x} ${s.y})">
                <circle class="puck" r="18.5"></circle>
                <path class="bolt" d="M1.5 -10 L-5.2 1.2 L-1 1.2 L-2.4 8.4 L5.3 -2.6 L1 -2.6 L2.3 -10 Z"></path>
            </g>
        `;
    }

    render() {
        const stations = this.showStations ? STATIONS : [];
        return html`
            <svg class="chart" viewBox="124 379 1563 560">
                <rect class="land" x="120" y="370" width="1580" height="580"></rect>
                <path class="lanes" d=${lanes()}></path>
                ${AREAS.map(k => this._sheet(k, true))}
                <polygon class="sea" points="${COAST} 990,950 100,950 100,375"></polygon>
                ${LINES.map(k => this._sheet(k, false))}
                <path class="limit" d=${SEA_LIMIT}></path>
                <path class="limit-core" d=${SEA_LIMIT}></path>
                <path class="seams" d="M124 468.5H1687M124 868.5H1687"></path>
                <path class="seams-v" d="M193 379V940M593 379V940M993 379V940M1393 379V940"></path>
                ${LABELS.map(l => l.width
                    ? svg`<text class=${l.kind ?? "town"} x=${l.x} y=${l.y} textLength=${l.width}>${l.text}</text>`
                    : svg`<text class=${l.kind ?? "town"} x=${l.x} y=${l.y}>${l.text}</text>`)}
                <polyline class="route" points=${ROUTE}></polyline>
                ${stations.filter(s => s.under).map(s => this._station(s))}
                <circle class="here" cx="949" cy="664.7" r="17.3"></circle>
            </svg>
            <div class="pin start">Start</div>
            <div class="pin destination">Destination</div>
            <svg class="overlay" viewBox="124 379 1563 560">
                ${stations.filter(s => !s.under).map(s => this._station(s))}
            </svg>
            <div class="zoom">
                <button title="Zoom in">
                    <svg viewBox="0 0 20 20"><path d="M0.5 10H19.5" stroke-width="2"></path><path d="M10 1V19" stroke-width="3"></path></svg>
                </button>
                <button title="Zoom out">
                    <svg viewBox="0 0 20 20"><path d="M0.5 10H19.5" stroke-width="2"></path></svg>
                </button>
            </div>
        `
    }
}

@customElement("app-root")
export class AppRoot extends LitElement {

    static styles = css`
        :host {
            display: block;
            width: 1809px;
            height: 905px;
            overflow: hidden;
            background: white;
            font-family: "Noto Sans", "Open Sans", sans-serif;
            text-align: center;
        }

        h1 {
            display: flex;
            justify-content: center;
            align-items: center;
            gap: 18px;
            height: 64px;
            margin: 0;
            padding: 0 0 2px 6px;
            color: #333333;
            font-size: 37.4px;
            font-weight: 700;
            letter-spacing: -1.05px;
        }

        h1 svg {
            width: 38px;
            height: 26px;
            margin-top: 9px;
        }

        .fields {
            display: flex;
            flex-wrap: wrap;
            justify-content: center;
            gap: 15px;
            padding: 21px 150px 0;
        }

        input[type="text"] {
            box-sizing: border-box;
            width: 465px;
            height: 51px;
            padding: 0 13px 1px;
            border: 1px solid #dddddd;
            border-radius: 6px;
            background: white;
            color: black;
            font: 20.8px "Liberation Sans", Arial, sans-serif;
        }

        .find {
            width: 165px;
            height: 55px;
            margin-top: 47px;
            padding: 0;
            border: 0;
            border-radius: 6px;
            background: #4caf50;
            color: white;
            font: 20.8px "Liberation Sans", Arial, sans-serif;
        }

        label {
            display: flex;
            justify-content: center;
            align-items: center;
            gap: 10px;
            height: 38px;
            margin-top: 14px;
            padding: 0 0 19px 6px;
            font-size: 24.4px;
            letter-spacing: -0.42px;
            white-space: nowrap;
        }

        label input {
            width: 19px;
            height: 19px;
            margin: 0 0 2px;
            accent-color: #0075ff;
        }

        route-map {
            width: 1563px;
            height: 560px;
            margin: 0 0 0 122px;
            border: 2px solid #111111;
            border-radius: 5px;
            box-shadow: 0 0 0 1px rgba(0, 0, 0, 0.2);
        }
    `

    @state()
    private _showStations = true

    private _toggle(e: Event) {
        this._showStations = (e.target as HTMLInputElement).checked;
    }

    render() {
        return html`
            <h1>
                <svg viewBox="0 0 38 26">
                    <path d="M1 12 Q1 10.5 3 10.5 L10 9.5 L15 2 Q16 0.5 19 0.5 L31 0.5 Q35 0.5 36 3 L38 12 V18 Q38 21 35 21 H3 Q0.5 21 0.5 18 Z" fill="#f8312f"></path>
                    <path d="M11.5 10.5 L16.5 3 Q17 2 18.5 2 H20.5 V11.5 H12 Z M22.5 2 H30.5 V11.5 H22.5 Z M32.5 2 Q34 2 34.5 3.5 L36.5 11.5 H32.5 Z" fill="#26c9fc"></path>
                    <path d="M11 20 H29 V22.5 H11 Z" fill="#9b9b9b"></path>
                    <path d="M0.5 13 H2.5 Q4 15 2.5 17 H0.5 Z" fill="#f4f4f4"></path>
                    <path d="M36 13 H38 V17 H36 Z" fill="#ca0b4a"></path>
                    <ellipse cx="12.5" cy="10.5" rx="1.5" ry="2.2" fill="#321b41"></ellipse>
                    <circle cx="9" cy="21" r="4.8" fill="#321b41"></circle>
                    <circle cx="9" cy="21" r="2.2" fill="#e6e6e6"></circle>
                    <circle cx="29" cy="21" r="4.8" fill="#321b41"></circle>
                    <circle cx="29" cy="21" r="2.2" fill="#e6e6e6"></circle>
                </svg>
                <span>EV Route Planner</span>
            </h1>
            <div class="fields">
                <input type="text" .value=${"Navaikulam, Kerala, India"}>
                <input type="text" .value=${"Kaimanam, Kerala, India"}>
                <input type="text" .value=${"100"}>
                <input type="text" .value=${"27"}>
            </div>
            <button class="find">Find Route</button>
            <label>
                <input type="checkbox" .checked=${this._showStations} @change=${this._toggle}>
                <span>Show Local Charging Stations (5)</span>
            </label>
            <route-map .showStations=${this._showStations}></route-map>
        `
    }
}
